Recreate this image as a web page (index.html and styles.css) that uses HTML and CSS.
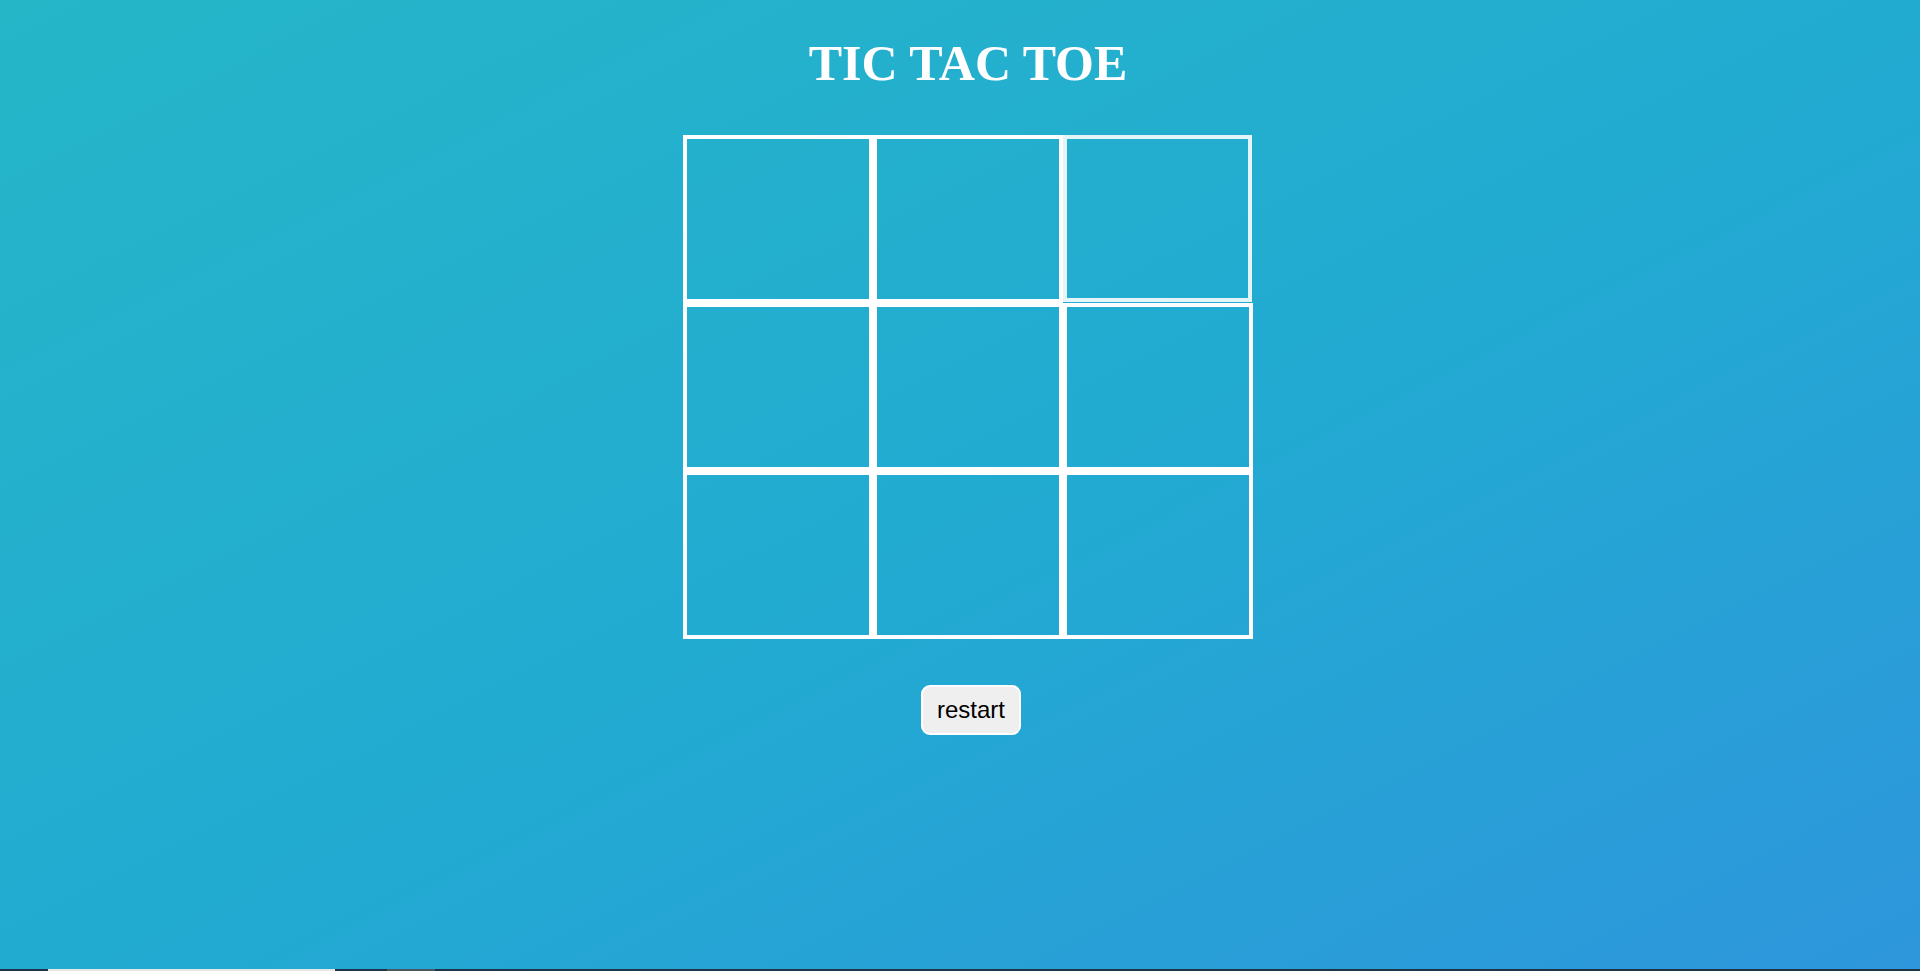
FILE: index.html
```html
<!DOCTYPE html>
<html lang="en">
<head>
<meta charset="utf-8">
<title>Tic Tac Toe</title>
<link rel="stylesheet" href="styles.css">
</head>
<body>
<main class="game">
  <h1 class="title">TIC TAC TOE</h1>
  <div class="board">
    <div class="cell"></div>
    <div class="cell"></div>
    <div class="cell cell-odd"></div>
    <div class="cell"></div>
    <div class="cell"></div>
    <div class="cell"></div>
    <div class="cell"></div>
    <div class="cell"></div>
    <div class="cell"></div>
  </div>
  <button class="restart" type="button">restart</button>
</main>
<div class="taskbar">
  <span class="task task-active"></span>
  <span class="task task-gray"></span>
</div>
</body>
</html>
```

FILE: styles.css
```css
html, body {
  margin: 0;
  height: 100%;
}

body {
  background: linear-gradient(to bottom right, #25b6c8 0%, #22aad2 55%, #2e96dc 100%);
  overflow: hidden;
}

.game {
  box-sizing: border-box;
  height: 100%;
  padding: 36px 0 0 16px;
  display: flex;
  flex-direction: column;
  align-items: center;
}

.title {
  margin: 0;
  font-family: "Liberation Serif", "Times New Roman", serif;
  font-size: 50px;
  font-weight: bold;
  line-height: 54px;
  color: #ffffff;
}

.board {
  margin-top: 45px;
  display: grid;
  grid-template-columns: repeat(3, 190px);
  grid-template-rows: repeat(3, 168px);
}

.cell {
  box-sizing: border-box;
  border: 4px solid #ffffff;
}

.cell-odd {
  width: 189px;
  height: 167px;
  border-color: rgba(255, 255, 255, 0.88);
}

.restart {
  margin: 46px 0 0 6px;
  box-sizing: border-box;
  width: 100px;
  height: 50px;
  padding: 0;
  font-family: "Liberation Sans", Arial, sans-serif;
  font-size: 24px;
  color: #000000;
  background: #efefef;
  border: 2px solid #ffffff;
  border-radius: 9px;
  cursor: pointer;
}

.taskbar {
  position: fixed;
  left: 0;
  right: 0;
  bottom: 0;
  height: 2px;
  background: #1c3547;
  display: flex;
}

.task {
  display: block;
  height: 2px;
}

.task-active {
  margin-left: 48px;
  width: 287px;
  background: #e6e6e6;
}

.task-gray {
  margin-left: 52px;
  width: 48px;
  background: #4a5762;
}
```
